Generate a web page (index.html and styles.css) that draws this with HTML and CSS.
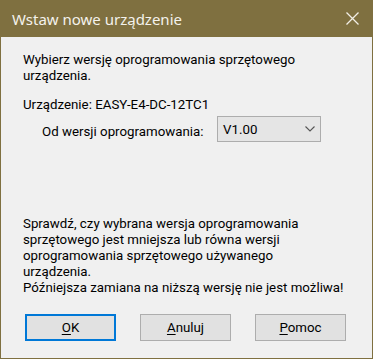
FILE: index.html
```html
<!DOCTYPE html>
<html lang="pl">
<head>
<meta charset="utf-8">
<title>Wstaw nowe urządzenie</title>
<link rel="stylesheet" href="styles.css">
</head>
<body>
<div class="window">
  <div class="titlebar">
    <span class="title">Wstaw nowe urządzenie</span>
    <svg class="close" width="13" height="13" viewBox="0 0 13 13" aria-hidden="true">
      <path d="M0.5 0.5 L12.5 12.5 M12.5 0.5 L0.5 12.5" stroke="#f2efe6" stroke-width="1.3" fill="none"/>
    </svg>
  </div>
  <div class="content">
    <p class="intro">Wybierz wersję oprogramowania sprzętowego<br>urządzenia.</p>
    <p class="device">Urządzenie: EASY-E4-DC-12TC1</p>
    <div class="version-row">
      <span class="label">Od wersji oprogramowania:</span>
      <div class="combo">
        <span class="combo-value">V1.00</span>
        <svg class="chevron" width="10" height="6" viewBox="0 0 10 6" aria-hidden="true">
          <path d="M0.5 0.5 L5 5 L9.5 0.5" stroke="#555" stroke-width="1.1" fill="none"/>
        </svg>
      </div>
    </div>
    <p class="note">Sprawdź, czy wybrana wersja oprogramowania<br>sprzętowego jest mniejsza lub równa wersji<br>oprogramowania sprzętowego używanego<br>urządzenia.<br>Późniejsza zamiana na niższą wersję nie jest możliwa!</p>
    <div class="buttons">
      <button class="btn btn-default"><u>O</u>K</button>
      <button class="btn"><u>A</u>nuluj</button>
      <button class="btn"><u>P</u>omoc</button>
    </div>
  </div>
</div>
</body>
</html>
```
FILE: styles.css
```css
html, body {
  margin: 0;
  padding: 0;
  background: #f0f0f0;
}
body {
  font-family: Roboto, "Noto Sans", sans-serif;
  font-size: 13.3px;
  color: #000;
}
.window {
  width: 373px;
  height: 359px;
  box-sizing: border-box;
  border: 1px solid #7f7040;
  border-top: 0;
  display: flex;
  flex-direction: column;
  background: #f0f0f0;
}
.titlebar {
  height: 37px;
  flex: none;
  background: #7f7040;
  margin: 0 -1px;
  display: flex;
  align-items: center;
  padding: 0 14px 0 12px;
}
.title {
  color: #f4f2ec;
  font-family: "Noto Sans", sans-serif;
  font-size: 15px;
  flex: 1;
}
.close {
  display: block;
}
.content {
  flex: 1;
  display: flex;
  flex-direction: column;
  padding: 0 0 0 22px;
  line-height: 16px;
}
.content p {
  margin: 0;
}
.intro {
  margin-top: 15px !important;
}
.device {
  margin-top: 13px !important;
}
.version-row {
  display: flex;
  align-items: flex-start;
  margin-top: 3px;
  padding-left: 19px;
}
.label {
  width: 175px;
  flex: none;
  padding-top: 8px;
}
.combo {
  width: 104px;
  height: 26px;
  box-sizing: border-box;
  border: 1px solid #adadad;
  background: #e5e5e5;
  display: flex;
  align-items: center;
  justify-content: space-between;
  padding: 2px 5px 0 5px;
}
.chevron {
  display: block;
  margin-top: -2px;
}
.note {
  margin-top: 74px !important;
}
.buttons {
  display: flex;
  gap: 24px;
  margin-top: 18px;
  padding-left: 2px;
}
.btn {
  width: 91px;
  height: 27px;
  box-sizing: border-box;
  border: 1px solid #adadad;
  background: #e1e1e1;
  font-family: inherit;
  font-size: 13.3px;
  color: #000;
  padding: 0;
  margin: 0;
}
.btn u {
  text-decoration-thickness: 1px;
  text-underline-offset: 2px;
}
.btn-default {
  border-color: #0078d7;
  box-shadow: inset 0 0 0 1px #0078d7;
}
```
